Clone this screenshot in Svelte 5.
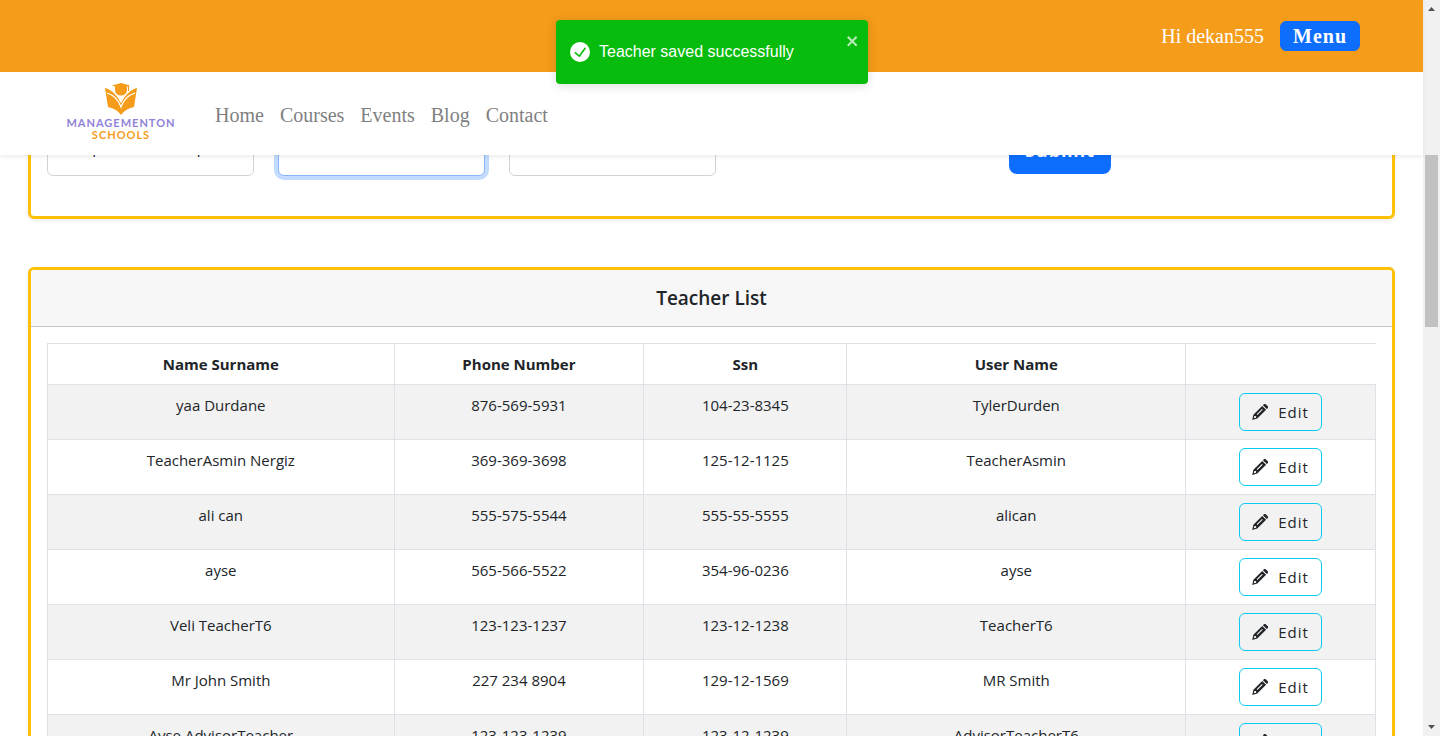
<script>
  const links = ['Home', 'Courses', 'Events', 'Blog', 'Contact'];
  const teachers = [
    ['yaa Durdane', '876-569-5931', '104-23-8345', 'TylerDurden'],
    ['TeacherAsmin Nergiz', '369-369-3698', '125-12-1125', 'TeacherAsmin'],
    ['ali can', '555-575-5544', '555-55-5555', 'alican'],
    ['ayse', '565-566-5522', '354-96-0236', 'ayse'],
    ['Veli TeacherT6', '123-123-1237', '123-12-1238', 'TeacherT6'],
    ['Mr John Smith', '227 234 8904', '129-12-1569', 'MR Smith'],
    ['Ayse AdvisorTeacher', '123-123-1239', '123-12-1239', 'AdvisorTeacherT6']
  ];
</script>

<div class="page">
  <div class="view">
    <header>
      <div class="topbar">
        <span>Hi dekan555</span>
        <button class="menu">Menu</button>
      </div>
      <nav>
        <a class="brand" href="#home" aria-label="Managementon Schools">
          <svg class="logo" viewBox="0 0 34 33" width="34" height="33" aria-hidden="true">
            <g fill="#f59c1a">
              <path d="M1 5 L5 6 Q13 10 17 18 Q21 10 29 6 L33 5 L30 24 Q21 26 17 32 Q13 26 4 24Z" />
              <path d="M3.500 5 Q12 9 17 19 Q22 9 30.500 5" fill="none" stroke="#fff" stroke-width="1.200" />
              <path d="M3 10 Q13 13 17 24 Q21 13 31 10" fill="none" stroke="#fff" stroke-width="1.200" />
              <path d="M11 4 h12 v3 a6 5.500 0 0 1 -12 0z" />
              <path d="M17 0 L26 2.500 L17 6 L8 2.500Z" />
              <path d="M24 3 h1 v5 h-1z" />
            </g>
          </svg>
          <span class="name">MANAGEMENTON</span>
          <span class="name sub">SCHOOLS</span>
        </a>
        <div class="links">
          {#each links as link}
            <a href={'#' + link.toLowerCase()}>{link}</a>
          {/each}
        </div>
      </nav>
    </header>

    <main>
      <section class="card form-card">
        <form>
          <input aria-label="Department" type="text" value="Computer Workshop" />
          <input aria-label="Password" class="focused" type="password" />
          <input aria-label="Note" type="text" />
          <div class="action"><button class="submit" type="button">Submit</button></div>
        </form>
      </section>

      <section class="card">
        <h2>Teacher List</h2>
        <div class="body">
          <table>
            <colgroup><col class="c1" /><col class="c2" /><col class="c3" /><col class="c4" /><col class="c5" /></colgroup>
            <thead>
              <tr><th>Name Surname</th><th>Phone Number</th><th>Ssn</th><th>User Name</th><td class="blank"></td></tr>
            </thead>
            <tbody>
              {#each teachers as row}
                <tr>
                  {#each row as cell}<td>{cell}</td>{/each}
                  <td>
                    <button class="edit">
                      <svg viewBox="0 0 16 16" width="16" height="16" fill="currentColor" aria-hidden="true">
                        <path d="M10.900 1.200 l.7-.7 a1.700 1.700 0 0 1 2.400 0 l1.500 1.500 a1.700 1.700 0 0 1 0 2.400 l-.7.700z" />
                        <path fill-rule="evenodd" d="M10.200 1.900 L14.100 5.800 L5.300 14.600 L0.200 15.900 L1.400 10.700Z M2.400 11.900 L1.800 14.300 L4.100 13.700 L4.100 12.100 L2.400 11.900Z M10 5 L4.700 10.300 L5.400 11 L10.700 5.700Z" />
                      </svg>
                      <span>Edit</span>
                    </button>
                  </td>
                </tr>
              {/each}
            </tbody>
          </table>
        </div>
      </section>
    </main>
  </div>

  <div class="scrollbar" aria-hidden="true">
    <svg viewBox="0 0 17 17" width="17" height="17"><path d="M5 11 L8.500 7 L12 11Z" fill="#505050" /></svg>
    <div class="track"><div class="thumb"></div></div>
    <svg viewBox="0 0 17 17" width="17" height="17"><path d="M5 6 L12 6 L8.500 10Z" fill="#505050" /></svg>
  </div>

  <div class="toast" role="alert">
    <svg viewBox="0 0 24 24" width="20" height="20" fill="#fff" aria-hidden="true">
      <path d="M12 0a12 12 0 1012 12A12.014 12.014 0 0012 0zm6.927 8.200l-6.845 9.289a1.011 1.011 0 01-1.430.188l-4.888-3.908a1 1 0 111.250-1.562l4.076 3.261 6.227-8.451a1 1 0 111.610 1.183z" />
    </svg>
    <span>Teacher saved successfully</span>
    <button class="close" aria-label="close">
      <svg viewBox="0 0 14 16" width="14" height="16" aria-hidden="true">
        <path fill="#fff" fill-rule="evenodd" d="M7.710 8.230l3.750 3.750-1.480 1.480-3.750-3.750-3.750 3.750L1 11.980l3.750-3.750L1 4.480 2.480 3l3.750 3.750L9.980 3l1.480 1.480-3.750 3.750z" />
      </svg>
    </button>
  </div>
</div>

<style>
  :global(body) { margin: 0; }
  .page, .page * { box-sizing: border-box; }
  .page {
    display: flex;
    height: 100vh;
    overflow: hidden;
    font-family: "Open Sans", "Noto Sans", sans-serif;
    font-size: 15px;
    line-height: 24px;
    color: #212529;
    background: #fff;
  }
  button { font-family: inherit; cursor: pointer; }
  .view { flex: 1; min-width: 0; display: flex; flex-direction: column; }
  header {
    flex: none;
    position: relative;
    z-index: 2;
    background: #fff;
    box-shadow: 0 2px 4px rgba(0, 0, 0, .075);
    font-family: "Liberation Serif", serif;
    font-size: 20px;
  }
  .topbar {
    display: flex;
    align-items: center;
    justify-content: flex-end;
    gap: 16px;
    height: 72px;
    padding: 0 63px;
    background: #f59c1a;
    color: #fff;
  }
  .menu {
    height: 30px;
    padding: 0 12px;
    border: 1px solid #0d6efd;
    border-radius: 6px;
    background: #0d6efd;
    color: #fff;
    font-size: 20px;
    font-weight: 700;
    letter-spacing: 1px;
    line-height: 24px;
  }
  nav { display: flex; align-items: center; gap: 36px; height: 83px; padding: 2px 63px 0; }
  .brand {
    display: flex;
    flex-direction: column;
    align-items: center;
    width: 116px;
    padding-bottom: 6px;
    text-decoration: none;
  }
  .logo { margin-bottom: 1px; }
  .name {
    font-family: Lato, sans-serif;
    font-weight: 700;
    font-size: 11px;
    line-height: 12px;
    letter-spacing: 1px;
    color: #8f82d8;
  }
  .sub { color: #f59c1a; }
  .links { display: flex; gap: 16px; }
  .links a { color: #7f7f7f; text-decoration: none; }
  main { flex: 1; min-height: 0; overflow: hidden; padding: 0 28px; }
  .card {
    border: 3px solid #ffc107;
    border-radius: 6px;
    background: #fff;
    box-shadow: 0 2px 4px rgba(0, 0, 0, .075);
  }
  .form-card { margin: -56px 0 48px; padding: 16px 16px 40px; }
  form { display: grid; grid-template-columns: repeat(3, 207px) 1fr; gap: 24px; align-items: end; }
  input {
    width: 100%;
    height: 58px;
    padding: 8px 12px;
    border: 1px solid #ced4da;
    border-radius: 6px;
    color: #212529;
    font: inherit;
  }
  .focused { border-color: #86b7fe; box-shadow: 0 0 0 4px rgba(13, 110, 253, .25); outline: none; }
  .action { display: flex; justify-content: center; padding: 0 0 2px 4px; }
  .submit {
    height: 48px;
    padding: 0 16px;
    border: 0;
    border-radius: 8px;
    background: #0d6efd;
    color: #fff;
    font-size: 18px;
    font-weight: 700;
    letter-spacing: 1px;
    line-height: 24px;
  }
  h2 {
    margin: 0;
    padding: 16px;
    border-bottom: 1px solid #c8c8c8;
    border-radius: 3px 3px 0 0;
    background: #f7f7f7;
    font-size: 19px;
    font-weight: 600;
    line-height: 24px;
    text-align: center;
  }
  .body { padding: 16px; }
  table { width: 100%; table-layout: fixed; border-collapse: collapse; text-align: center; }
  .c1 { width: 26.100%; }
  .c2 { width: 18.800%; }
  .c3 { width: 15.300%; }
  .c4 { width: 25.500%; }
  .c5 { width: 14.300%; }
  th, td { padding: 8px; border: 1px solid #dee2e6; vertical-align: top; }
  td.blank { border-right-color: transparent; }
  tbody tr:nth-child(odd) { background: #f2f2f2; }
  .edit {
    display: inline-flex;
    align-items: center;
    gap: 10px;
    height: 38px;
    padding: 0 12px;
    border: 1px solid #0dcaf0;
    border-radius: 6px;
    background: transparent;
    color: #212529;
    font-size: 15px;
    letter-spacing: 1px;
    vertical-align: top;
  }
  .scrollbar { flex: none; display: flex; flex-direction: column; width: 17px; background: #f1f1f1; }
  .track { flex: 1; padding: 0 2px; }
  .track::before { content: ""; display: block; height: 19.600%; }
  .thumb { height: 24.600%; background: #c1c1c1; }
  .toast {
    position: absolute;
    z-index: 3;
    top: 20px;
    left: calc(50% - 164px);
    display: flex;
    align-items: center;
    gap: 9px;
    width: 312px;
    height: 64px;
    padding: 0 14px;
    border-radius: 4px;
    background: #07bc0c;
    box-shadow: 0 1px 10px rgba(0, 0, 0, .1), 0 2px 15px rgba(0, 0, 0, .05);
    color: #fff;
    font-family: "Liberation Sans", sans-serif;
    font-size: 16px;
  }
  .close {
    position: absolute;
    top: 13px;
    right: 8px;
    display: flex;
    padding: 0;
    border: 0;
    background: none;
    opacity: .7;
  }
</style>
